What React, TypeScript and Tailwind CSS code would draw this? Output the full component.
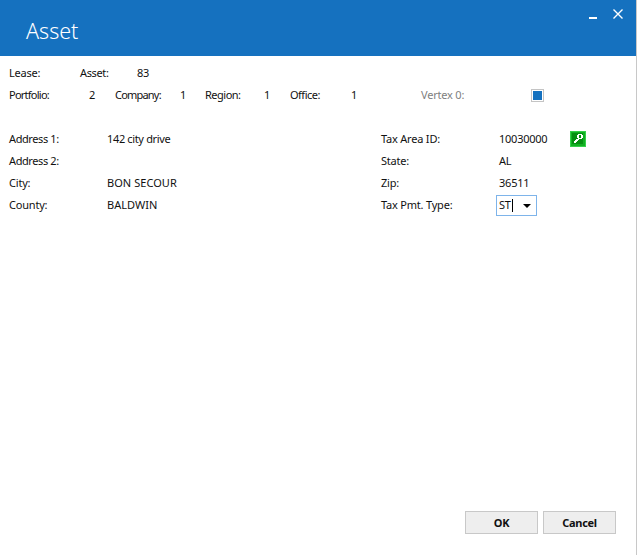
const font = "font-['Open_Sans',sans-serif]";

function Cell({ w, children, className }: { w: string; children?: React.ReactNode; className?: string }) {
  return <div className={`${w} shrink-0 ${className ?? ""}`}>{children}</div>;
}

function KeyIcon() {
  return (
    <svg width="16" height="16" viewBox="0 0 16 16" shapeRendering="crispEdges">
      <rect x="0" y="0" width="16" height="16" fill="#35d04a" />
      <rect x="1" y="1" width="14" height="14" fill="#12b022" />
      <rect x="2" y="2" width="11" height="11" fill="#069012" />
      <path d="M8 3h4v1h1v3h-1v1H8V7H7V4h1zM9 4v3h2V4z" fill="#fff" fillRule="evenodd" />
      <path d="M7 8h2v1H8v1H7v1H6v1H4v-2h1V9h1V8z" fill="#fff" />
    </svg>
  );
}

function AddressRow({
  label,
  value,
  right,
  rightValue,
  labelClass,
  valueClass,
}: {
  label: string;
  value?: string;
  right: string;
  rightValue?: React.ReactNode;
  labelClass?: string;
  valueClass?: string;
}) {
  return (
    <div className="flex h-[22px] items-center">
      <Cell w="w-[98px]" className={labelClass}>{label}</Cell>
      <Cell w="w-[274px]" className={valueClass}>{value}</Cell>
      <Cell w="w-[118px]">{right}</Cell>
      {rightValue}
    </div>
  );
}

export default function App() {
  return (
    <div className={`${font} flex h-[555px] w-[637px] flex-col border-r border-[#c8c8c8] bg-white text-[11px] tracking-[-0.2px] text-[#111]`}>
      <header className="flex h-[56px] shrink-0 items-start justify-between bg-[#1571bf] text-white">
        <h1 className="ml-[26px] mt-[16px] text-[21.5px] leading-[30px] font-light tracking-normal">Asset</h1>
        <div className="mr-[13px] mt-[9px] flex items-center gap-[16px]">
          <div className="mt-[7px] h-[2px] w-[8px] bg-white" />
          <svg width="10" height="10" viewBox="0 0 10 10" stroke="#fff" strokeWidth="1.4" fill="none">
            <path d="M0.5 0.5l9 9M9.5 0.5l-9 9" />
          </svg>
        </div>
      </header>

      <main className="flex flex-1 flex-col px-[9px] pt-[6px]">
        <div className="flex h-[22px] items-center">
          <Cell w="w-[71px]">Lease:</Cell>
          <Cell w="w-[57px]" className="tracking-[-0.35px]">Asset:</Cell>
          <Cell w="w-[30px]">83</Cell>
        </div>
        <div className="flex h-[22px] items-center">
          <Cell w="w-[80px]" className="tracking-[-0.75px]">Portfolio:</Cell>
          <Cell w="w-[26px]">2</Cell>
          <Cell w="w-[65px]" className="tracking-[-0.8px]">Company:</Cell>
          <Cell w="w-[25px]">1</Cell>
          <Cell w="w-[59px]" className="tracking-[-0.5px]">Region:</Cell>
          <Cell w="w-[26px]">1</Cell>
          <Cell w="w-[61px]" className="tracking-[-0.5px]">Office:</Cell>
          <Cell w="w-[70px]">1</Cell>
          <Cell w="w-[110px]" className="text-[#808080]">Vertex 0:</Cell>
          <div className="h-[13px] w-[13px] border border-[#c4c4c4] p-[1px]">
            <div className="h-full w-full bg-[#1571bf]" />
          </div>
        </div>

        <div className="mt-[22px]">
          <AddressRow
            label="Address 1:"
            labelClass="tracking-[-0.4px]"
            value="142 city drive"
            valueClass="tracking-[-0.35px]"
            right="Tax Area ID:"
            rightValue={
              <div className="flex items-center">
                <div className="w-[71px] tracking-[-0.25px]">10030000</div>
                <KeyIcon />
              </div>
            }
          />
          <AddressRow label="Address 2:" labelClass="tracking-[-0.4px]" right="State:" rightValue={<div>AL</div>} />
          <AddressRow label="City:" value="BON SECOUR" valueClass="tracking-[0.05px]" right="Zip:" rightValue={<div>36511</div>} />
          <AddressRow
            label="County:"
            value="BALDWIN"
            valueClass="tracking-[0.05px]"
            right="Tax Pmt. Type:"
            rightValue={
              <div className="-ml-[3px] flex h-[21px] w-[41px] items-center justify-between border border-[#7eb4ea] pl-[2px] pr-[4px]">
                <span className="flex items-center">
                  ST<span className="ml-[1px] h-[13px] w-px bg-black" />
                </span>
                <span className="mr-[1px] mt-[1px] h-0 w-0 border-x-[4px] border-t-[4px] border-x-transparent border-t-black" />
              </div>
            }
          />
        </div>
      </main>

      <footer className="flex justify-end gap-[5px] pb-[21px] pr-[20px]">
        <button className="h-[23px] w-[73px] border border-[#c8c8c8] bg-[#eeeeee] pt-[1px] font-bold">OK</button>
        <button className="h-[23px] w-[73px] border border-[#c8c8c8] bg-[#eeeeee] pt-[1px] font-bold tracking-[-0.3px]">Cancel</button>
      </footer>
    </div>
  );
}
